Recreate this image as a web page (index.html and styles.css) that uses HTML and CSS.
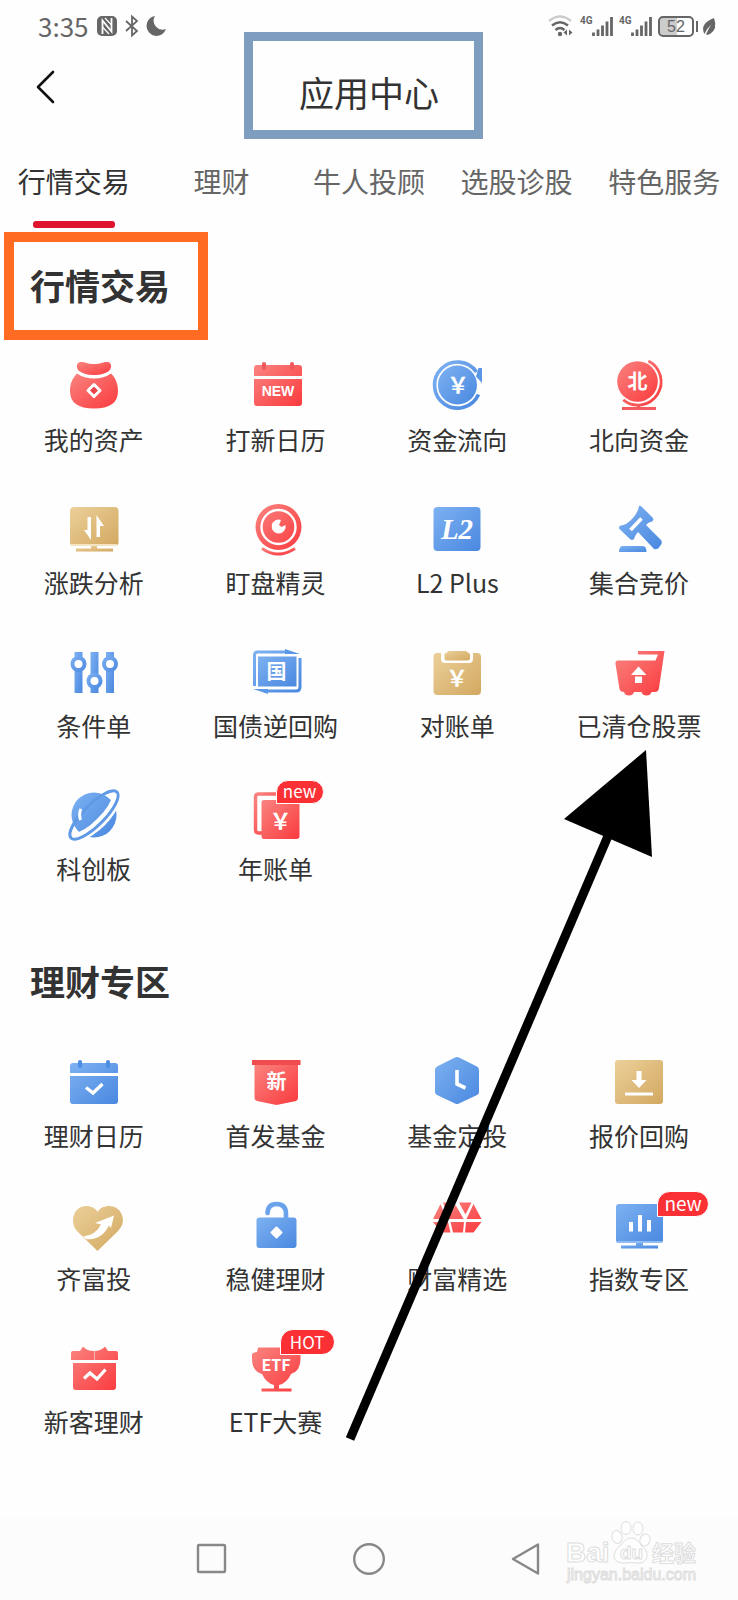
FILE: index.html
```html
<!DOCTYPE html>
<html lang="zh-CN">
<head>
<meta charset="utf-8">
<meta name="viewport" content="width=device-width, initial-scale=1">
<title>应用中心</title>
<link rel="stylesheet" href="styles.css">
</head>
<body>
<svg class="defs" width="0" height="0" aria-hidden="true">
  <defs>
    <linearGradient id="red" x1="0" y1="0" x2="1" y2="1"><stop offset="0" stop-color="#f98480"/><stop offset="1" stop-color="#fb3a3e"/></linearGradient>
    <linearGradient id="blue" x1="0" y1="0" x2="1" y2="1"><stop offset="0" stop-color="#7db1f1"/><stop offset="1" stop-color="#4a88e0"/></linearGradient>
    <linearGradient id="gold" x1="0" y1="0" x2="1" y2="1"><stop offset="0" stop-color="#ecd09a"/><stop offset="1" stop-color="#d2a860"/></linearGradient>
  </defs>
</svg>
<div class="page">
  <div class="status">
    <div class="status-left">
      <span class="time">3:35</span>
      <svg width="20" height="22" viewBox="0 0 20 22"><rect x="0" y="1" width="20" height="20" rx="5" fill="#666"/><path d="M5.500 19V5.500L14.500 16.500V3" fill="none" stroke="#fefefe" stroke-width="1.800"/><path d="M8 3L14.500 10M5.500 12L12 19" fill="none" stroke="#fefefe" stroke-width="1.200"/></svg>
      <svg width="14" height="22" viewBox="0 0 14 22"><path d="M1 6L12 16L7 20.500V1.500L12 6L1 16" fill="none" stroke="#666" stroke-width="1.800"/></svg>
      <svg width="20" height="22" viewBox="0 0 20 22"><path d="M8 1A10 10 0 1 0 19 14A9 9 0 0 1 8 1Z" fill="#666"/></svg>
    </div>
    <div class="status-right">
      <svg width="26" height="22" viewBox="0 0 26 22"><g fill="none" stroke-width="2.400"><path d="M1 6Q12 -3 23 6" stroke="#ccc"/><path d="M4 10.500Q12 4 20 10.500M7.500 15Q12 11 16.500 15" stroke="#666"/></g><circle cx="12" cy="19" r="2.200" fill="#666"/><path d="M19 14.500V20.500L15.500 17.500ZM21 14.500V20.500L24.500 17.500Z" fill="#666"/></svg>
      <span class="signal"><b>4G</b><svg width="21" height="22" viewBox="0 0 21 22"><path d="M1.500 17.500V21M6 14.500V21M10.500 10.500V21M15 6.500V21M19.500 2V21" stroke="#666" stroke-width="2.800"/></svg></span>
      <span class="signal"><b>4G</b><svg width="21" height="22" viewBox="0 0 21 22"><path d="M1.500 17.500V21M6 14.500V21M10.500 10.500V21M15 6.500V21M19.500 2V21" stroke="#666" stroke-width="2.800"/></svg></span>
      <span class="battery">52</span>
      <svg width="14" height="22" viewBox="0 0 14 22"><path d="M12 3Q16 14 8 19Q6 20 4 19.500Q6 14 9.500 9.500Q5 13 2.500 19Q-3 9 12 3Z" fill="#666"/></svg>
    </div>
  </div>

  <header class="header">
    <button class="back" type="button" aria-label="返回"><svg width="20" height="34" viewBox="0 0 20 34"><path d="M17 2L2 17L17 32" fill="none" stroke="#111" stroke-width="2.600" stroke-linecap="round" stroke-linejoin="round"/></svg></button>
    <h1 class="title">应用中心</h1>
  </header>

  <nav class="tabs">
    <a class="tab active" href="#trade">行情交易</a>
    <a class="tab" href="#wealth">理财</a>
    <a class="tab" href="#adviser">牛人投顾</a>
    <a class="tab" href="#pick">选股诊股</a>
    <a class="tab" href="#special">特色服务</a>
  </nav>

  <main class="main">
    <section class="section" id="trade">
      <h2 class="section-title marked">行情交易</h2>
      <div class="grid">
        <a class="tile" href="#"><svg class="icon" viewBox="0 0 60 60"><path d="M16 7C21 6.500 23 9 30 9C37 9 39 6.500 44 7C48 8 48 13 45 16Q38 20.500 30 20Q22 20.500 15 16C12 13 12 8 16 7Z" fill="url(#red)"/><path d="M13 18.500Q20 23.500 30 23.500Q40 23.500 47 18.500C52 23 54 30 54 36Q54 53.500 30 53.500Q6 53.500 6 36C6 29 8 24 13 18.500Z" fill="url(#red)"/><path d="M30 29.500L36 35.500L30 41.500L24 35.500Z" fill="#e94247" stroke="#fff" stroke-width="3" stroke-linejoin="round"/></svg><span>我的资产</span></a>
        <a class="tile" href="#"><svg class="icon" viewBox="0 0 60 60"><path d="M11 10H53Q56 10 56 13V21H8V13Q8 10 11 10ZM8 24H56V48Q56 51 53 51H11Q8 51 8 48Z" fill="url(#red)"/><path d="M18 9V13M46 9V13" stroke="#f2585c" stroke-width="4" stroke-linecap="round"/><text class="glyph new" x="32" y="41">NEW</text></svg><span>打新日历</span></a>
        <a class="tile" href="#"><svg class="icon" viewBox="0 0 60 60"><circle cx="30.500" cy="30" r="19.500" fill="url(#blue)"/><path d="M51.500 39.500A23 23 0 1 1 49.500 17" fill="none" stroke="url(#blue)" stroke-width="3.600"/><path d="M51.500 13H55V28L49 21.500Z" fill="#5a96e6"/><text class="glyph yen" x="31" y="38">￥</text></svg><span>资金流向</span></a>
        <a class="tile" href="#"><svg class="icon" viewBox="0 0 60 60"><circle cx="28.500" cy="26.500" r="20.300" fill="url(#red)"/><path d="M39.400 6A23.300 23.300 0 1 1 14.200 44.900" fill="none" stroke="url(#red)" stroke-width="2.800"/><path d="M28 49H31V52H47V55H13V52H28Z" fill="#f25a5d"/><text class="glyph cjk" x="28.500" y="34">北</text></svg><span>北向资金</span></a>

        <a class="tile" href="#"><svg class="icon" viewBox="0 0 60 60"><rect x="6" y="9" width="48.500" height="39" rx="4" fill="url(#gold)"/><path d="M7 47H53" stroke="#f5e4c2" stroke-width="2"/><path d="M27 48H33V50.500H49V53.500H12V50.500H27Z" fill="url(#gold)"/><path d="M23.500 19H27V42L20 32H23.500ZM36 39H32.500V17L40 28H36Z" fill="#fff"/></svg><span>涨跌分析</span></a>
        <a class="tile" href="#"><svg class="icon" viewBox="0 0 60 60"><circle cx="32.500" cy="29" r="23" fill="url(#red)"/><circle cx="32.500" cy="29" r="17" fill="none" stroke="#fff" stroke-width="2.400"/><path d="M35 22A7 7 0 1 0 39.500 27L35.500 29L33 27Z" fill="#fff"/><path d="M16 50.500Q32 61.500 49 50.500" fill="none" stroke="url(#red)" stroke-width="3"/></svg><span>盯盘精灵</span></a>
        <a class="tile" href="#"><svg class="icon" viewBox="0 0 60 60"><rect x="6.500" y="9" width="47" height="44" rx="4" fill="url(#blue)"/><text class="glyph l2" x="30" y="41">L2</text></svg><span>L2 Plus</span></a>
        <a class="tile" href="#"><svg class="icon" viewBox="0 0 60 60"><path d="M30 8Q31 7 33 9L44 20Q45 22 43 23.500Q39 24 37 27L52 42Q54 45 51 48Q49 52 45 51L29 34Q26 37 25 41Q23 43 21 41L10.500 31Q9 28.500 12 27.500Q17 27 22 22Q29 15 30 8Z" fill="url(#blue)"/><path d="M21.500 32L32.500 20.500" stroke="#fff" stroke-width="3.600"/><path d="M13 48H34Q37.500 48 37.500 54H10Q10 49 13 48Z" fill="url(#blue)"/></svg><span>集合竞价</span></a>

        <a class="tile" href="#"><svg class="icon" viewBox="0 0 60 60"><g fill="url(#blue)"><rect x="10.500" y="11" width="8" height="41"/><rect x="26.500" y="11" width="8" height="41"/><rect x="42" y="11" width="8" height="41"/><circle cx="14.500" cy="23" r="8"/><circle cx="30.500" cy="40" r="8"/><circle cx="46" cy="23" r="8"/></g><g fill="#fff"><circle cx="14.500" cy="23" r="4"/><circle cx="30.500" cy="40" r="4"/><circle cx="46" cy="23" r="4"/></g></svg><span>条件单</span></a>
        <a class="tile" href="#"><svg class="icon" viewBox="0 0 60 60"><rect x="12" y="15.500" width="38.500" height="30" fill="url(#blue)"/><path d="M8.500 45V14Q8.500 11 11.500 11H42M54 17V46Q54 50 50 50H18" fill="none" stroke="url(#blue)" stroke-width="3"/><path d="M39 8L54 13H39ZM22 53L7 48H22Z" fill="#5c98e8"/><text class="glyph cjk" x="30.500" y="38">国</text></svg><span>国债逆回购</span></a>
        <a class="tile" href="#"><svg class="icon" viewBox="0 0 60 60"><path d="M10 12H14V18Q14 22 18 22H42Q46 22 46 18V12H50Q54 12 54 16V50Q54 54 50 54H10.500Q6.500 54 6.500 50V16Q6.500 12 10 12Z" fill="url(#gold)"/><path d="M22 10H39L43 13V17Q43 19.500 40 19.500H20Q17.500 19.500 17.500 17V13Z" fill="url(#gold)"/><text class="glyph yen" x="30" y="45">￥</text></svg><span>对账单</span></a>
        <a class="tile" href="#"><svg class="icon" viewBox="0 0 60 60"><path d="M29 10H55.500L50 47Q49.500 51 46 51H42.500Q41.500 54.500 37.500 54.500Q33.500 54.500 32.500 51H25Q24 54.500 20 54.500Q16 54.500 15 51Q11 51 10.500 48L6.500 23Q6 19.500 9 19.500H46.500L49 13.500H29Z" fill="url(#red)"/><path d="M29.500 25.500L37.500 34H22ZM26 35.500H33V42H26Z" fill="#fff"/></svg><span>已清仓股票</span></a>

        <a class="tile" href="#"><svg class="icon" viewBox="0 0 60 60"><circle cx="30" cy="31" r="22.500" fill="url(#blue)"/><g transform="translate(30 31) rotate(-45)" fill="none"><path d="M-28 3Q-14 8.500 0 8.500Q14 8.500 28 3L30 9Q14 15 0 15Q-14 15 -30 9Z" fill="#fefefe"/><ellipse rx="32.500" ry="10.500" stroke="#5f9ae6" stroke-width="3"/><path d="M-29 0Q-20 7 0 7Q20 7 29 0" stroke="#fefefe" stroke-width="4"/></g><path d="M17 25Q14.500 30 16.500 36" fill="none" stroke="#fff" stroke-width="3"/></svg><span>科创板</span></a>
        <a class="tile" href="#"><svg class="icon" viewBox="0 0 60 60"><path d="M17 49H13Q9.500 49 9.500 46V13Q9.500 10 12.500 10H36" fill="none" stroke="url(#red)" stroke-width="3.500"/><path d="M18 16H34L38 20H53.500V52Q53.500 55 50.500 55H18Q15.500 55 15.500 52V18.500Q15.500 16 18 16Z" fill="url(#red)"/><text class="glyph yen" x="34.500" y="45">￥</text></svg><em class="badge small">new</em><span>年账单</span></a>
      </div>
    </section>

    <section class="section" id="wealth">
      <h2 class="section-title">理财专区</h2>
      <div class="grid">
        <a class="tile" href="#"><svg class="icon" viewBox="0 0 60 60"><path d="M9 12H51Q54 12 54 15V22H6V15Q6 12 9 12ZM6 25H54V50Q54 53 51 53H9Q6 53 6 50Z" fill="url(#blue)"/><path d="M16 11V15M44 11V15" stroke="#4d8de2" stroke-width="4" stroke-linecap="round"/><path d="M22 36.500L29 42L38.500 33" fill="none" stroke="#fff" stroke-width="3.400"/></svg><span>理财日历</span></a>
        <a class="tile" href="#"><svg class="icon" viewBox="0 0 60 60"><path d="M8.500 12H52V47Q52 49 50 50L30.500 54L11 50Q8.500 49 8.500 47Z" fill="url(#red)"/><path d="M6 9H54.500V14H6Z" fill="#f04b4f"/><text class="glyph cjk" x="30.500" y="38">新</text></svg><span>首发基金</span></a>
        <a class="tile" href="#"><svg class="icon" viewBox="0 0 60 60"><path d="M28 6.500Q30 5.500 32 6.500L50 15.500Q52 16.500 52 19V41Q52 43 50 44L32 52.500Q30 53.500 28 52.500L10 44Q8 43 8 41V19Q8 16.500 10 15.500Z" fill="url(#blue)"/><path d="M30 19V33L38.500 37" fill="none" stroke="#fff" stroke-width="3.600"/></svg><span>基金定投</span></a>
        <a class="tile" href="#"><svg class="icon" viewBox="0 0 60 60"><rect x="6" y="9" width="48" height="44" rx="3" fill="url(#gold)"/><path d="M27.500 20H32.500V29H37.500L30 37L22.500 29H27.500ZM16 41.500H44V44.500H16Z" fill="#fff"/></svg><span>报价回购</span></a>

        <a class="tile" href="#"><svg class="icon" viewBox="0 0 60 60"><path d="M33.500 18C29 9 9 9 9 27Q9 34 16 40L33.500 57L51 40Q59 33 59 26C58 9 38 9 33.500 18Z" fill="url(#gold)"/><path d="M50 21.500L31 29L37 30.500Q32 41 19 42.500L22 45Q37 47 45 31.500L47 34Z" fill="#fff"/></svg><span>齐富投</span></a>
        <a class="tile" href="#"><svg class="icon" viewBox="0 0 60 60"><rect x="10.500" y="23.500" width="40" height="30.500" rx="3" fill="url(#blue)"/><path d="M21.500 19Q22 10 30.500 10Q40 10 40 20V25" fill="none" stroke="#6aa3ec" stroke-width="4.600" stroke-linecap="round"/><path d="M30.500 33.500L35.500 38.500L30.500 43.500L25.500 38.500Z" fill="#fff" stroke="#fff" stroke-width="2" stroke-linejoin="round"/></svg><span>稳健理财</span></a>
        <a class="tile" href="#"><svg class="icon" viewBox="0 0 60 60"><path d="M13.500 10L19.500 25H6ZM16 8.500H26.500L21 20.500ZM28.600 11L36.600 25H21ZM32 8.500H44.500L38.500 20.500ZM46.500 10L54.500 25H39.500ZM6 28H21L23.500 38.500H14ZM23.500 28H37L36 38.500H26ZM39 28H54.500L46.500 38.500H38Z" fill="url(#red)"/></svg><span>财富精选</span></a>
        <a class="tile" href="#"><svg class="icon" viewBox="0 0 60 60"><rect x="7" y="10" width="47" height="39" rx="3" fill="url(#blue)"/><path d="M8 48H53" stroke="#8fbcf5" stroke-width="2"/><path d="M27 49H34V51.500H49V54.500H12V51.500H27Z" fill="url(#blue)"/><path d="M20 28H24V37.500H20ZM29 21H33V37.500H29ZM38 26H42V37.500H38Z" fill="#fff"/></svg><em class="badge">new</em><span>指数专区</span></a>

        <a class="tile" href="#"><svg class="icon" viewBox="0 0 60 60"><path d="M19 9.500Q23 14 30 14Q37 14 41 9.500L44 14H52Q54 14 54 16V23H7V16Q7 14 9 14H16ZM9 26H52V50Q52 53 49 53H12Q9 53 9 50Z" fill="url(#red)"/><path d="M30.500 14V23" stroke="#fab5b5" stroke-width="1"/><path d="M20 41.500L26 36L33 42L41.500 32.500" fill="none" stroke="#fff" stroke-width="3.200"/></svg><span>新客理财</span></a>
        <a class="tile" href="#"><svg class="icon" viewBox="0 0 60 60"><path d="M12 10.500H49V15H54.500V22Q54.500 34 45 37Q41 46 33 48V51.500H45.500V54.500H15.500V51.500H28V48Q20 46 16 37Q6 34 6 22V17Q8 15 11 15Z" fill="url(#red)"/><text class="glyph etf" x="30" y="34">ETF</text></svg><em class="badge hot">HOT</em><span>ETF大赛</span></a>
      </div>
    </section>
  </main>

  <nav class="sysnav">
    <button type="button" aria-label="最近任务"><svg width="32" height="32" viewBox="0 0 32 32"><rect x="2" y="2" width="27" height="27" rx="1" fill="none" stroke="#888" stroke-width="2.400"/></svg></button>
    <button type="button" aria-label="主页"><svg width="32" height="32" viewBox="0 0 32 32"><circle cx="16" cy="16" r="14.800" fill="none" stroke="#888" stroke-width="2.400"/></svg></button>
    <button type="button" aria-label="返回"><svg width="32" height="32" viewBox="0 0 32 32"><path d="M3 16L28 1.500V30.500Z" fill="none" stroke="#888" stroke-width="2.400" stroke-linejoin="round"/></svg></button>
    <svg class="watermark" width="136" height="66" viewBox="0 0 136 66" role="img" aria-label="Baidu 经验">
      <g fill="#fefefe" stroke="#dedede" stroke-width="1">
        <text class="wm-name" x="0" y="42">Bai</text>
        <ellipse cx="51" cy="17" rx="5" ry="6.500" transform="rotate(-15 51 17)"/><ellipse cx="60" cy="8" rx="5" ry="6.500"/><ellipse cx="72" cy="8.500" rx="5" ry="6.500"/><ellipse cx="79" cy="20" rx="5" ry="6" transform="rotate(20 79 20)"/>
        <path d="M65 18Q71 18 75 25Q82 31 81 37Q79 44 70 43Q65 42 60 43Q50 44 48 37Q48 30 55 25Q60 18 65 18Z"/>
        <text class="wm-du" x="54" y="39">du</text>
        <text class="wm-cn" x="86" y="41">经验</text>
        <text class="wm-url" x="1" y="60">jingyan.baidu.com</text>
      </g>
    </svg>
  </nav>

  <svg class="arrow" width="308" height="692" viewBox="0 0 308 692" aria-hidden="true"><path d="M301 0L307 107L219 69Z"/><path d="M263 86L5 689" stroke="#000" stroke-width="9"/></svg>
</div>
</body>
</html>
```
FILE: styles.css
```css
* { box-sizing: border-box; }

body {
  margin: 0;
  background: #fefefe;
  color: #333;
  font-family: "Noto Sans CJK SC", "Noto Sans", sans-serif;
}

a { color: inherit; text-decoration: none; }

button {
  padding: 0;
  border: 0;
  background: none;
  display: flex;
}

svg { display: block; overflow: visible; flex: none; }

.defs { position: absolute; }

.page {
  position: relative;
  display: flex;
  flex-direction: column;
  min-height: 100vh;
}

/* Status bar */
.status {
  display: flex;
  justify-content: space-between;
  align-items: center;
  height: 52px;
  padding: 0 22px 0 38px;
  color: #666;
}

.status-left,
.status-right { display: flex; align-items: center; gap: 8px; }

.time { font-size: 26px; line-height: 32px; }

.status-right { gap: 6px; }

.signal { display: flex; align-items: flex-start; }

.signal b {
  width: 12px;
  font: 700 10px/12px Roboto, sans-serif;
}

.battery {
  position: relative;
  width: 36px;
  height: 21px;
  margin-right: 2px;
  border: 2px solid #666;
  border-radius: 5px;
  background: linear-gradient(90deg, #ccc 54%, transparent 54%);
  font: 400 16px/17px "Liberation Sans", sans-serif;
  text-align: center;
}

.battery::after {
  content: "";
  position: absolute;
  right: -6px;
  top: 3px;
  width: 2px;
  height: 11px;
  background: #666;
}

/* Title bar */
.header {
  display: grid;
  grid-template-columns: 1fr auto 1fr;
  align-items: center;
  height: 84px;
  padding: 0 36px 4px;
}

.back { justify-self: start; align-self: start; padding-top: 18px; }

.title {
  position: relative;
  margin: 0;
  font-size: 35px;
  font-weight: 400;
  line-height: 48px;
}

.title::after {
  content: "";
  position: absolute;
  inset: -36px -44px -23px -55px;
  border: 9px solid #7f9dbf;
}

/* Tabs */
.tabs { display: flex; }

.tab {
  position: relative;
  flex: 1;
  height: 92px;
  padding-top: 23px;
  font-size: 28px;
  line-height: 44px;
  text-align: center;
  white-space: nowrap;
  color: #666;
}

.tab.active { color: #333; }

.tab.active::after {
  content: "";
  position: absolute;
  left: 50%;
  bottom: 0;
  width: 82px;
  height: 7px;
  margin-left: -41px;
  border-radius: 3px;
  background: #e0142d;
}

/* Sections */
.main { flex: 1; }

.section { padding-top: 33px; }

.section + .section { margin-top: 36px; }

.section-title {
  position: relative;
  width: max-content;
  margin: 0 0 46px 30px;
  font-size: 35px;
  font-weight: 700;
  line-height: 48px;
}

.section-title.marked::after {
  content: "";
  position: absolute;
  inset: -29px -38px -31px -26px;
  border: 10px solid #ff6b22;
}

.grid {
  display: grid;
  grid-template-columns: repeat(4, 1fr);
  row-gap: 39px;
  padding: 0 8px 0 3px;
}

.tile {
  position: relative;
  display: flex;
  flex-direction: column;
  align-items: center;
  gap: 4px;
  font-size: 25px;
  line-height: 40px;
  white-space: nowrap;
}

.icon { width: 60px; height: 60px; }

.glyph { fill: #fff; text-anchor: middle; font-weight: 700; }
.new { font-size: 14px; font-family: "Liberation Sans", sans-serif; }
.yen { font-size: 22px; }
.cjk { font-size: 20px; }
.l2 { font: italic 700 29px "Liberation Serif", serif; }
.etf { font-size: 16px; }

.badge {
  position: absolute;
  left: 50%;
  top: -3px;
  width: 52px;
  height: 26px;
  margin-left: 18px;
  border: 1px solid #fff;
  border-radius: 13px 13px 13px 0;
  background: #fb3035;
  color: #fff;
  font-size: 19px;
  font-style: normal;
  line-height: 22px;
  text-align: center;
}

.badge.small {
  top: -4px;
  width: 48px;
  height: 24px;
  margin-left: 0;
  font-size: 17px;
  line-height: 20px;
}

.badge.hot {
  top: -8px;
  width: 55px;
  margin-left: 4px;
  font-size: 17px;
  line-height: 24px;
}

/* System navigation */
.sysnav {
  position: relative;
  display: flex;
  justify-content: center;
  align-items: center;
  gap: 125px;
  height: 82px;
  background: #fcfcfc;
}

.watermark {
  position: absolute;
  right: 36px;
  bottom: 14px;
}

.wm-name { font: 700 28px "Liberation Sans", sans-serif; }
.wm-du { font: 700 19px "Liberation Sans", sans-serif; }
.wm-cn { font-size: 22px; font-weight: 700; }
.wm-url { font: 400 16px "Liberation Sans", sans-serif; }

.arrow {
  position: absolute;
  left: 345px;
  top: 750px;
  pointer-events: none;
}
```
